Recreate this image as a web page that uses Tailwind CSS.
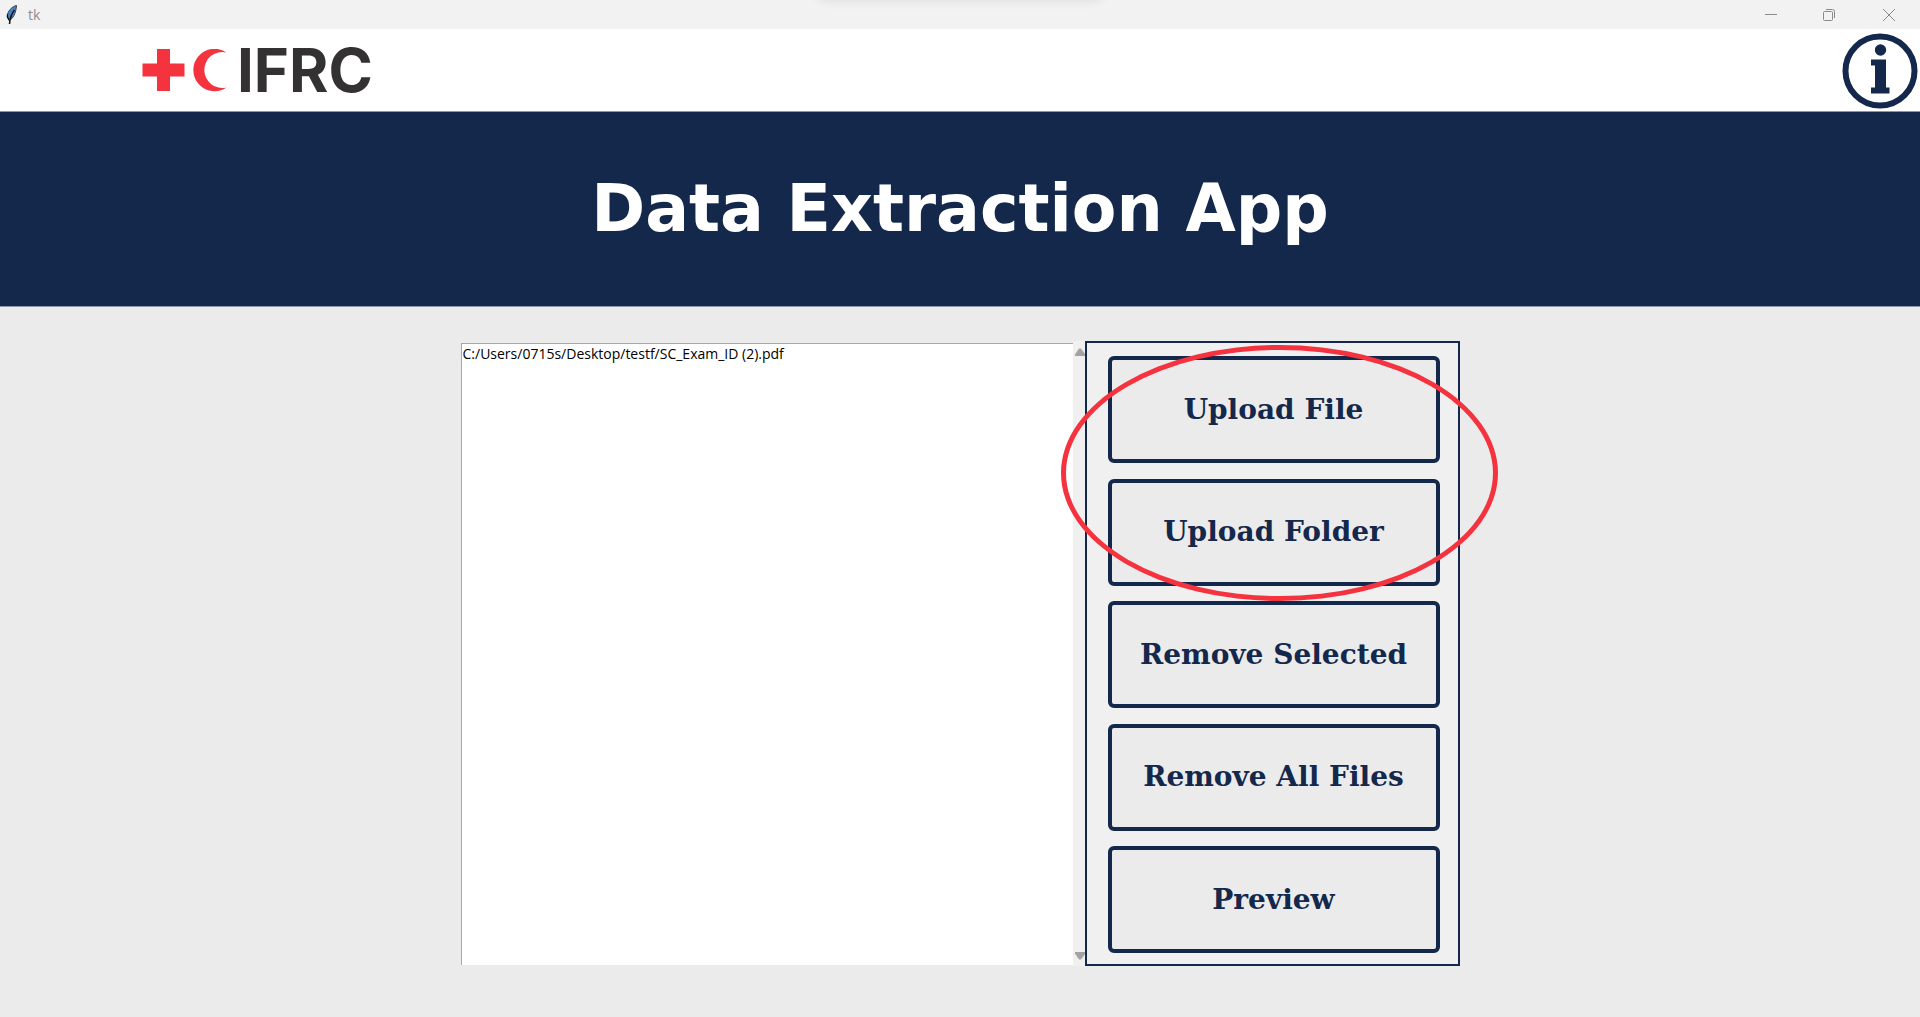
<!DOCTYPE html>
<html lang="en">
<head>
<meta charset="utf-8">
<meta name="viewport" content="width=device-width, initial-scale=1">
<title>tk</title>
<script src="https://cdn.jsdelivr.net/npm/@tailwindcss/browser@4"></script>
</head>
<body class="flex min-h-screen flex-col bg-[#ebebeb] font-['Open_Sans',sans-serif]">
  <!-- Window title bar -->
  <div class="relative flex h-[29px] shrink-0 items-center justify-between overflow-hidden bg-[#f2f2f2] pl-1">
    <div class="absolute -top-5 left-1/2 h-4 w-[280px] -translate-x-1/2 rounded-full shadow-[0_0_12px_4px_rgba(0,0,0,0.1)]"></div>
    <div class="flex items-center gap-2 text-[14px] leading-5 text-[#8e8e8e]">
      <svg class="h-5 w-4" viewBox="0 0 16 20" aria-hidden="true">
        <path d="M12.500 .5C8 1.500 3.500 6 3.200 11.500L5 15.500C9 14 12 8 12.500 .5Z" fill="#4584cc" stroke="#3a3f48" stroke-width="1"/>
        <path d="M10.500 5C8 8 6 12 5.500 19" fill="none" stroke="#111" stroke-width="1.500"/>
        <path d="M3.500 9V12L5 15" fill="none" stroke="#111" stroke-width="1.200"/>
      </svg>
      <span>tk</span>
    </div>
    <div class="flex h-full text-[#8a8a8a]">
      <button type="button" aria-label="Minimize" class="flex w-[58px] items-center justify-center">
        <svg class="size-3" viewBox="0 0 12 12"><path d="M0 5.500H12" stroke="currentColor"/></svg>
      </button>
      <button type="button" aria-label="Restore" class="flex w-[58px] items-center justify-center">
        <svg class="size-3" viewBox="0 0 12 12" fill="none" stroke="currentColor"><rect x=".5" y="2.500" width="9" height="9" rx="1"/><path d="M3 .5H9.500A2 2 0 0 1 11.500 2.500V9"/></svg>
      </button>
      <button type="button" aria-label="Close" class="flex w-[62px] items-center justify-center">
        <svg class="size-3" viewBox="0 0 12 12"><path d="M0 0L12 12M12 0L0 12" stroke="currentColor"/></svg>
      </button>
    </div>
  </div>

  <!-- Brand header -->
  <header class="flex h-[82px] shrink-0 items-center justify-between bg-white pr-[2px] pl-[142px]">
    <div class="flex items-center gap-[10px]">
      <svg class="h-[43px] w-[85px]" viewBox="0 0 85 43" fill="#f5333f" role="img" aria-label="Red cross and red crescent">
        <path d="M15 0H28V14.500H42.500V27.500H28V42H15V27.500H.5V14.500H15Z"/>
        <path d="M84.500 3.500A21.200 21.200 0 1 0 84.500 38.500A18 18 0 1 1 84.500 3.500Z"/>
      </svg>
      <span class="font-['Inter',sans-serif] text-[60px] leading-[60px] font-bold text-[#333132]">IFRC</span>
    </div>
    <button type="button" aria-label="Information" class="pt-[2px]">
      <svg class="size-[76px]" viewBox="0 0 76 76" fill="#14284c">
        <circle cx="38" cy="38" r="34.500" fill="none" stroke="#14284c" stroke-width="6"/>
        <circle cx="38.500" cy="17" r="5.700"/>
        <path d="M29 26.500H44V54.500H47.500V60.500H29V54.500H33V32.500H29Z"/>
      </svg>
    </button>
  </header>

  <!-- Title banner -->
  <div class="flex h-[196px] shrink-0 items-center justify-center border-y border-[#8c96a8] bg-[#14284c]">
    <h1 class="font-['DejaVu_Sans',sans-serif] text-[65px] leading-[80px] font-bold text-white">Data Extraction App</h1>
  </div>

  <main class="mx-auto flex w-full max-w-[999px] grow pt-[34px] pb-[51px]">
    <ul class="mt-[2px] mb-px grow border-t border-l border-[#a8a8a8] bg-white pl-px text-[14px] leading-5 text-black">
      <li>C:/Users/0715s/Desktop/testf/SC_Exam_ID (2).pdf</li>
    </ul>
    <!-- Scroll track with its arrows -->
    <div class="flex w-3 flex-col items-end justify-between overflow-hidden bg-[#f0f0f0] pt-[7px] pb-[6px]">
      <svg class="h-2 w-[10px]" viewBox="0 0 10 8" fill="#a3a3a3"><path d="M0 8V6.500L4 .5H6L10 6V8Z"/></svg>
      <svg class="h-2 w-[10px]" viewBox="0 0 10 8" fill="#a3a3a3"><path d="M0 0V1.500L4 7.500H6L10 2V0Z"/></svg>
    </div>
    <div class="relative flex w-[375px] shrink-0 flex-col justify-between gap-[15px] border-2 border-[#14284c] bg-[#f0f0f0] pt-[13px] pr-[18px] pb-[11px] pl-[21px] font-['DejaVu_Serif',serif] text-[28px] leading-8 font-bold text-[#14284c]">
      <button type="button" class="min-h-[107px] rounded-md border-4 border-[#14284c] bg-[#ebebeb]">Upload File</button>
      <button type="button" class="min-h-[107px] rounded-md border-4 border-[#14284c] bg-[#ebebeb]">Upload Folder</button>
      <button type="button" class="min-h-[107px] rounded-md border-4 border-[#14284c] bg-[#ebebeb]">Remove Selected</button>
      <button type="button" class="min-h-[107px] rounded-md border-4 border-[#14284c] bg-[#ebebeb]">Remove All Files</button>
      <button type="button" class="min-h-[107px] rounded-md border-4 border-[#14284c] bg-[#ebebeb]">Preview</button>
      <!-- Highlight around the upload actions -->
      <div class="pointer-events-none absolute top-[2px] -left-[26px] h-[256px] w-[437px] rounded-[50%] border-5 border-[#f5333f]"></div>
    </div>
  </main>
</body>
</html>
